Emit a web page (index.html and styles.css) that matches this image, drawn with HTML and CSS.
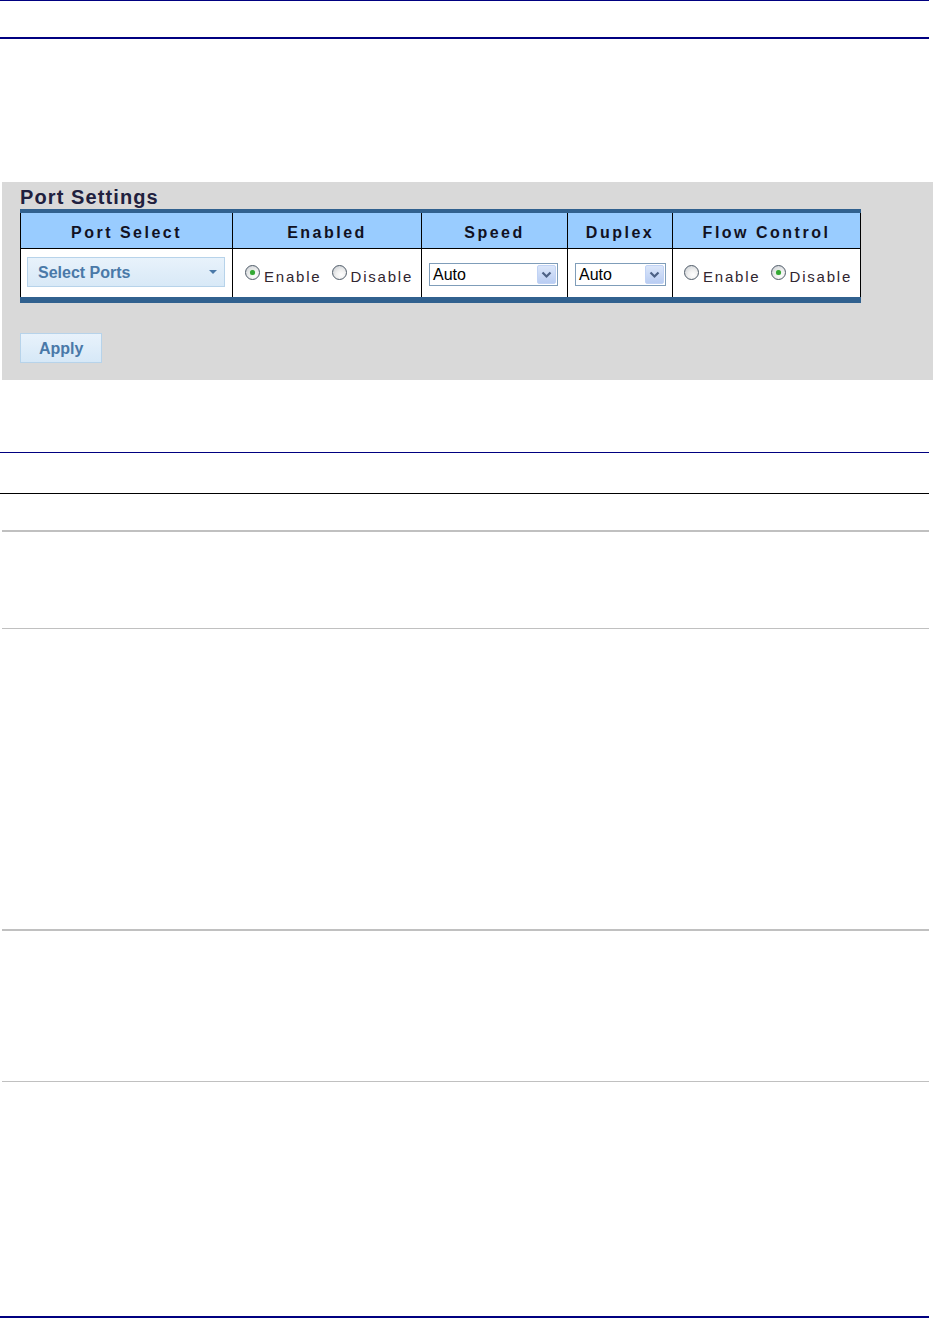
FILE: index.html
```html
<!DOCTYPE html>
<html>
<head>
<meta charset="utf-8">
<link rel="stylesheet" href="styles.css">
</head>
<body>
<div class="page">
  <div class="rule navy r-top"></div>
  <div class="rule navy thick r-head"></div>

  <div class="panel">
    <div class="panel-title">Port Settings</div>
    <div class="tbl">
      <div class="stripe top"></div>
      <div class="grid">
        <div class="th">Port Select</div>
        <div class="th">Enabled</div>
        <div class="th">Speed</div>
        <div class="th">Duplex</div>
        <div class="th last">Flow Control</div>

        <div class="td td-ports">
          <div class="ports">
            <span class="ports-text">Select Ports</span>
            <span class="ports-caret"></span>
          </div>
        </div>
        <div class="td td-radio r-enabled">
          <span class="radio checked"></span><span class="rlabel">Enable</span>
          <span class="radio gap"></span><span class="rlabel">Disable</span>
        </div>
        <div class="td td-select">
          <div class="select speed">
            <span class="sel-text">Auto</span>
            <span class="sel-btn"><svg width="11" height="8" viewBox="0 0 11 8"><path d="M1.5 1.5 L5.5 5.5 L9.5 1.5" fill="none" stroke="#4d6185" stroke-width="2.2"/></svg></span>
          </div>
        </div>
        <div class="td td-select">
          <div class="select duplex">
            <span class="sel-text">Auto</span>
            <span class="sel-btn"><svg width="11" height="8" viewBox="0 0 11 8"><path d="M1.5 1.5 L5.5 5.5 L9.5 1.5" fill="none" stroke="#4d6185" stroke-width="2.2"/></svg></span>
          </div>
        </div>
        <div class="td td-radio r-flow last">
          <span class="radio"></span><span class="rlabel">Enable</span>
          <span class="radio checked gap"></span><span class="rlabel">Disable</span>
        </div>
      </div>
      <div class="stripe bottom"></div>
    </div>
    <div class="btn">Apply</div>
  </div>

  <div class="rule navy r3"></div>
  <div class="rule black r4"></div>
  <div class="rule gray thick r5"></div>
  <div class="rule gray r6"></div>
  <div class="rule gray thick r7"></div>
  <div class="rule gray r8"></div>
  <div class="rule navy thick r9"></div>
</div>
</body>
</html>
```

FILE: styles.css
```css
html, body {
  margin: 0;
  padding: 0;
  background: #ffffff;
}
body {
  font-family: "Liberation Sans", Arial, sans-serif;
}
.page {
  width: 933px;
  position: relative;
}
.rule {
  height: 1px;
  width: 929px;
}
.rule.thick { height: 2px; }
.navy { background: #000080; }
.black { background: #000000; }
.gray { background: #c0c0c0; margin-left: 2px; width: 927px; }

.r-top { margin-top: 0; }
.r-head { margin-top: 36px; }
.r3 { margin-top: 72px; }
.r4 { margin-top: 40px; }
.r5 { margin-top: 36px; }
.r6 { margin-top: 96px; }
.r7 { margin-top: 300px; }
.r8 { margin-top: 150px; }
.r9 { margin-top: 234px; }

.panel {
  margin-top: 143px;
  margin-left: 2px;
  width: 931px;
  height: 198px;
  box-sizing: border-box;
  background: #d9d9d9;
  padding: 4px 0 0 18px;
}
.panel-title {
  height: 23px;
  line-height: 23px;
  font-size: 20px;
  font-weight: bold;
  letter-spacing: 1.1px;
  color: #20203e;
}
.tbl {
  width: 841px;
}
.stripe { background: #31618f; }
.stripe.top { height: 4px; }
.stripe.bottom { height: 6px; }
.grid {
  display: grid;
  grid-template-columns: 212px 189px 146px 105px 189px;
}
.th, .td {
  box-sizing: border-box;
  border-left: 1px solid #000;
}
.th.last, .td.last { border-right: 1px solid #000; }
.th {
  height: 36px;
  background: #99ccff;
  border-bottom: 1px solid #000;
  padding-top: 4px;
  line-height: 31px;
  font-size: 16px;
  font-weight: bold;
  letter-spacing: 2.5px;
  text-align: center;
  color: #111122;
}
.td {
  height: 48px;
  background: #ffffff;
  display: flex;
  align-items: flex-start;
}
.td-ports { padding: 8px 0 0 6px; }
.ports {
  width: 198px;
  height: 30px;
  box-sizing: border-box;
  border: 1px solid #b7d3ea;
  background: linear-gradient(#e8f2fb, #d8e9f7);
  display: flex;
  align-items: center;
  padding: 1px 0 0 10px;
  position: relative;
}
.ports-text {
  font-size: 16px;
  font-weight: bold;
  color: #4a79a8;
}
.ports-caret {
  position: absolute;
  right: 7px;
  top: 12px;
  width: 0;
  height: 0;
  border-left: 4px solid transparent;
  border-right: 4px solid transparent;
  border-top: 4px solid #4a79a8;
}

.td-radio { padding-top: 18px; }
.r-enabled { padding-left: 12px; }
.r-flow { padding-left: 11px; }
.radio {
  display: inline-block;
  box-sizing: border-box;
  width: 15px;
  height: 15px;
  margin-top: -2px;
  border-radius: 50%;
  border: 1px solid #4f5b68;
  background: radial-gradient(circle at 62% 68%, #ffffff 0%, #f0f0f0 40%, #c3c8cd 100%);
  position: relative;
  flex: none;
}
.radio.checked::after {
  content: "";
  position: absolute;
  left: 4px;
  top: 4px;
  width: 5px;
  height: 5px;
  border-radius: 50%;
  background: #34a834;
  box-shadow: 0 0 1px #7fd07f;
}
.radio.gap { margin-left: 10px; }
.rlabel {
  margin-left: 4px;
  font-size: 15px;
  line-height: 20px;
  letter-spacing: 1.8px;
  color: #302530;
  white-space: nowrap;
}

.td-select { padding: 14px 0 0 7px; }
.select {
  box-sizing: border-box;
  height: 23px;
  border: 1px solid #7f9db9;
  background: #fff;
  display: flex;
  justify-content: space-between;
}
.select.speed { width: 129px; }
.select.duplex { width: 91px; }
.sel-text {
  font-size: 16px;
  line-height: 21px;
  padding-left: 3px;
  color: #000;
}
.sel-btn {
  width: 19px;
  height: 19px;
  margin: 1px 1px 0 0;
  box-sizing: border-box;
  border: 1px solid #c1d3f5;
  border-radius: 2px;
  background: linear-gradient(#dbe6fa, #b9cdf2);
  display: flex;
  align-items: center;
  justify-content: center;
}

.btn {
  margin-top: 30px;
  width: 82px;
  height: 30px;
  box-sizing: border-box;
  border: 1px solid #b7d3ea;
  background: linear-gradient(#e8f2fb, #d6e8f7);
  font-size: 16px;
  font-weight: bold;
  line-height: 30px;
  color: #4a79a8;
  padding-left: 18px;
}
```
